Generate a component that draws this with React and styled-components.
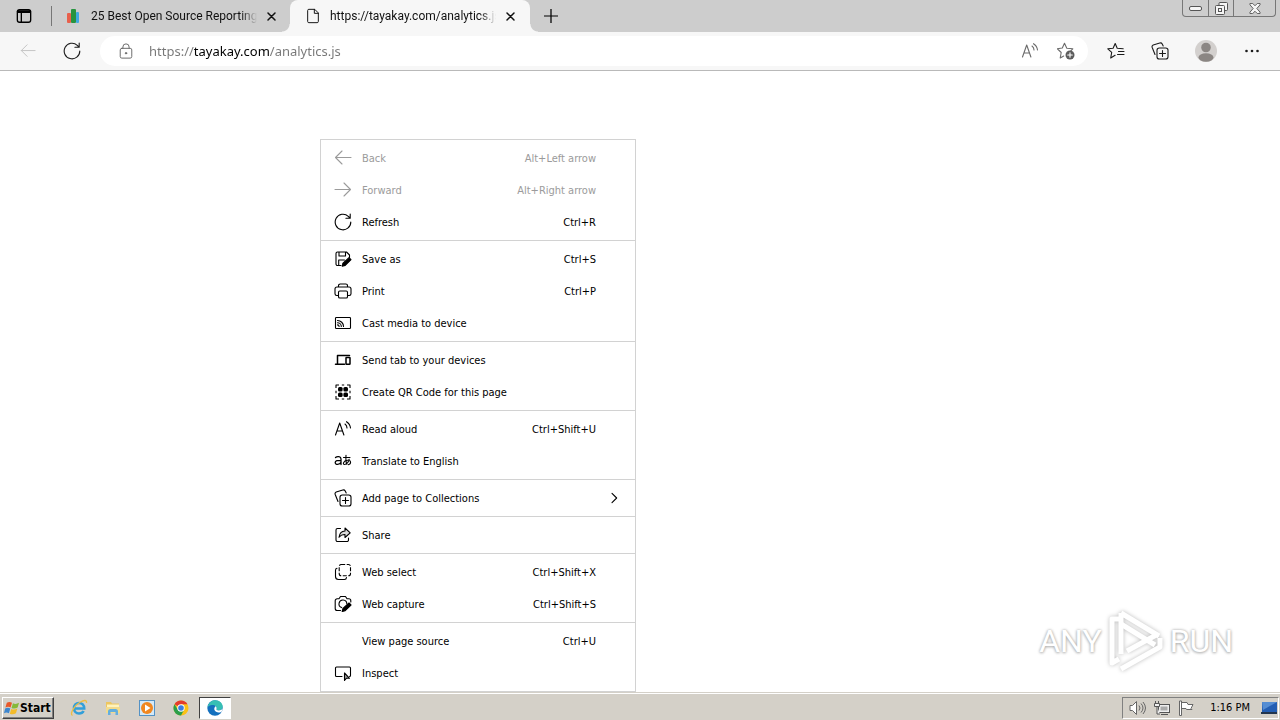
import React from "react";
import styled, { createGlobalStyle, css } from "styled-components";

const GlobalStyle = createGlobalStyle`
	* {
		box-sizing: border-box;
	}

	body {
		margin: 0;
		background: #fff;
		overflow: hidden;
		font-family: "Noto Sans", "Open Sans", sans-serif;
	}

	button,
	input {
		font: inherit;
		color: inherit;
		border: 0;
		padding: 0;
		margin: 0;
		background: none;
	}

	svg {
		display: block;
		flex: none;
	}
`;

const Browser = styled.div`
	display: flex;
	flex-direction: column;
	height: 100vh;
`;

/* tab strip */

const TabStrip = styled.header`
	display: flex;
	align-items: stretch;
	height: 32px;
	background: #cdcdcd;
`;

const TabActions = styled.button`
	display: flex;
	align-items: center;
	justify-content: center;
	width: 48px;
`;

const StripDivider = styled.div`
	width: 1px;
	height: 20px;
	margin: 6px 2px 0 3px;
	background: #767676;
`;

const Tab = styled.div`
	position: relative;
	display: flex;
	align-items: center;
	width: 236px;
	padding: 0 9px 0 12px;
	font-family: Roboto, sans-serif;
	font-size: 12px;
	color: #111;

	${({ $active }) =>
		$active &&
		css`
			width: 240px;
			padding: 0 10px 0 15px;
			background: #f7f7f7;
			border-radius: 8px 8px 0 0;

			&::before,
			&::after {
				content: "";
				position: absolute;
				bottom: 0;
				width: 8px;
				height: 8px;
			}

			&::before {
				right: 100%;
				background: radial-gradient(circle at 0 0, transparent 7px, #f7f7f7 8px);
			}

			&::after {
				left: 100%;
				background: radial-gradient(circle at 100% 0, transparent 7px, #f7f7f7 8px);
			}
		`}
`;

const TabTitle = styled.span`
	flex: 1;
	min-width: 0;
	margin: 0 4px 0 9px;
	line-height: 20px;
	white-space: nowrap;
	overflow: hidden;
	mask-image: linear-gradient(to left, transparent, #000 16px);
`;

const TabButton = styled.button`
	display: flex;
	align-items: center;
	justify-content: center;
	width: 20px;
	height: 20px;
`;

const NewTab = styled(TabButton)`
	width: 42px;
	height: 32px;
`;

const WindowControls = styled.div`
	display: flex;
	height: 17px;
	margin: 0 4px 0 auto;
	border: 1px solid #777;
	border-top: 0;
	border-radius: 0 0 4px 4px;
`;

const WindowButton = styled.button`
	display: flex;
	align-items: center;
	justify-content: center;
	width: ${({ $wide }) => ($wide ? 42 : 25)}px;
	border-left: ${({ $first }) => ($first ? "0" : "1px solid #777")};
`;

/* toolbar */

const Toolbar = styled.div`
	display: flex;
	align-items: center;
	height: 39px;
	padding: 0 6px;
	background: #f7f7f7;
	border-bottom: 1px solid #b9b9b9;
`;

const ToolButton = styled.button`
	display: flex;
	align-items: center;
	justify-content: center;
	width: 44px;
	height: 30px;
	color: ${({ $muted }) => ($muted ? "#c4c4c4" : "#1b1b1b")};
`;

const ProfileButton = styled(ToolButton)`
	width: 48px;
`;

const AddressBar = styled.form`
	display: flex;
	flex: 1;
	align-items: center;
	height: 30px;
	margin: 0 6px;
	padding-left: 18px;
	padding-right: 4px;
	border-radius: 15px;
	background: #fff;
	color: #6b6b6b;
`;

/* the host part of the address is darker than the rest */
const AddressInput = styled.input`
	flex: 1;
	min-width: 0;
	height: 20px;
	margin-left: 15px;
	font-size: 13px;
	outline: 0;
	color: transparent;
	background: linear-gradient(90deg, #767676 45px, #000 45px, #000 120px, #767676 120px);
	background-clip: text;
`;

const AddressButton = styled(ToolButton)`
	width: 36px;
	color: #6b6b6b;
`;

/* page and context menu */

const Page = styled.main`
	position: relative;
	flex: 1;
	background: #fff;
`;

const Menu = styled.div`
	position: absolute;
	top: 68px;
	left: 320px;
	width: 316px;
	border: 1px solid #d2d2d2;
	background: #fff;
	font-family: "DejaVu Sans Condensed", "DejaVu Sans", sans-serif;
	font-size: 11px;
`;

const MenuGroup = styled.div`
	padding: 2px 0;

	& + & {
		border-top: 1px solid #d2d2d2;
	}
`;

const MenuItem = styled.button`
	display: grid;
	grid-template-columns: 18px 1fr auto 24px;
	align-items: center;
	width: 100%;
	height: 32px;
	padding: 0 14px 0 13px;
	text-align: left;
	color: ${({ disabled }) => (disabled ? "#9b9b9b" : "#000")};
`;

const MenuLabel = styled.span`
	margin-left: 10px;
	white-space: nowrap;
`;

const Shortcut = styled.span`
	white-space: nowrap;
	margin-right: 1px;
`;

const SubmenuArrow = styled.span`
	display: flex;
	justify-content: flex-end;
	padding-right: 1px;
`;

const Watermark = styled.div`
	position: absolute;
	right: 47px;
	bottom: 18px;
	display: flex;
	align-items: center;
	gap: 6px;
	color: #fff;
	font-family: Roboto, "Liberation Sans", sans-serif;
	font-size: 32px;
	line-height: 66px;
	text-shadow: 0 0 3px #aaa, 0 1px 3px #bbb;

	svg {
		filter: drop-shadow(0 0 2px #bbb);
	}
`;

/* taskbar */

const Taskbar = styled.footer`
	display: flex;
	align-items: center;
	height: 28px;
	padding: 2px 1px 0 2px;
	border-top: 1px solid #d4d0c8;
	box-shadow: inset 0 1px #fff;
	background: #d4d0c8;
	font-family: "DejaVu Sans Condensed", "DejaVu Sans", sans-serif;
	font-size: 11px;
`;

const StartButton = styled.button`
	display: flex;
	align-items: center;
	width: 52px;
	height: 22px;
	padding-left: 1px;
	border: 1px solid;
	border-color: #fff #404040 #404040 #fff;
	box-shadow: inset -1px -1px #808080;
	font-size: 12px;
	font-weight: bold;
	color: #000;
`;

const QuickLaunch = styled.nav`
	display: flex;
	margin-left: 9px;
	gap: 2px;
`;

const TaskButton = styled.button`
	display: flex;
	align-items: center;
	justify-content: center;
	width: 32px;
	height: 22px;

	${({ $active }) =>
		$active &&
		css`
			background: #fff;
			border: 1px solid;
			border-color: #404040 #fff #fff #404040;
		`}
`;

const Tray = styled.div`
	display: flex;
	align-items: center;
	height: 22px;
	margin-left: auto;
	padding: 0 1px 0 6px;
	gap: 8px;
	border: 1px solid;
	border-color: #808080 #fff #fff #808080;
`;

const Clock = styled.time`
	margin: 0 3px 0 8px;
	white-space: nowrap;
	color: #000;
`;

const Icon = ({ size = 18, width = 1.1, children, ...rest }) => (
	<svg
		width={size}
		height={size}
		viewBox="0 0 18 18"
		fill="none"
		stroke="currentColor"
		strokeWidth={width}
		strokeLinecap="round"
		strokeLinejoin="round"
		aria-hidden="true"
		{...rest}
	>
		{children}
	</svg>
);

const icons = {
	back: <path d="M17 8.500H1.500M8 2 1.500 8.500 8 15" />,
	forward: <path d="M1 8.500h15.500M10 2 16.500 8.500 10 15" />,
	refresh: <path d="M16.800 9A7.800 7.800 0 1 1 14.300 3.300L16 5M16.200 1v4.300h-4.300" />,
	save: (
		<>
			<path d="M7 15.500H3.500A1.500 1.500 0 0 1 2 14V3.500A1.500 1.500 0 0 1 3.500 2h9L15.500 5v2.500M5 2v4h6.500V2M4.700 15.500V10h5.800" />
			<path d="m8.200 16.200.8-3 6-5.500 2 2-5.800 5.700z" fill="currentColor" />
		</>
	),
	print: (
		<>
			<path d="M4.500 13.500H2.700A1.700 1.700 0 0 1 1 11.800V7a2 2 0 0 1 2-2h12a2 2 0 0 1 2 2v4.800a1.700 1.700 0 0 1-1.700 1.700h-1.800M4.500 5V3.700A1.700 1.700 0 0 1 6.200 2h5.600a1.700 1.700 0 0 1 1.700 1.700V5" />
			<rect x="4.500" y="9" width="9" height="7" rx="1.300" />
		</>
	),
	cast: (
		<>
			<rect x="1.500" y="3.500" width="15" height="11" rx=".8" />
			<path d="M3.500 6.500a6 6 0 0 1 6 6M3.500 8.700a3.800 3.800 0 0 1 3.800 3.800M3.500 10.900a1.600 1.600 0 0 1 1.600 1.600" />
		</>
	),
	devices: (
		<>
			<path d="M3.500 12.500V4.500h12M1.500 13.200h9" strokeWidth="1.500" />
			<rect x="12" y="6.500" width="4" height="6.700" rx=".5" strokeWidth="1.500" />
		</>
	),
	qr: (
		<>
			<path d="M5 2H2v3M13 2h3v3M2 13v3h3M16 13v3h-3M2 7.800v2.400M16 7.800v2.400M7.800 2h2.400M7.800 16h2.400" strokeLinecap="butt" />
			<g fill="currentColor" stroke="none">
				<rect x="4" y="4" width="4.600" height="4.600" rx="1.500" />
				<rect x="9.400" y="4" width="4.600" height="4.600" rx="1.500" />
				<rect x="4" y="9.400" width="4.600" height="4.600" rx="1.500" />
				<rect x="9.400" y="9.400" width="4.600" height="4.600" rx="1.500" />
			</g>
		</>
	),
	read: <path d="m1.500 15 4.200-12 4.200 12M3 11h5.600M11 4a5 5 0 0 1 2 4M12.500 1.700A8.500 8.500 0 0 1 16.500 8" />,
	translate: (
		<>
			<path d="M1.500 5.500c1.800-1.600 5.500-1.200 5.500 1.400V12.500M7 8.300c-3.300 0-5.800.4-5.800 2.300 0 2.500 4.400 2.400 5.800-.3" strokeWidth="1.300" />
			<path d="M9.500 5.500h6.500M12 3.300c-.3 4-.2 6.700.8 8.900M15.200 7.200c-.8 3-3 5.300-4.700 5.300-2.200 0-1-4.200 3.200-4.200 3.800 0 3.700 3.700.5 4.400" />
		</>
	),
	collections: (
		<>
			<path d="M4 12.500 1.200 5.500A2 2 0 0 1 2.200 3l6.600-2a2 2 0 0 1 2.400 1l1 2" />
			<rect x="6" y="6" width="11" height="11" rx="2.300" />
			<path d="M11.500 8.500v6M8.500 11.500h6" />
		</>
	),
	share: (
		<>
			<path d="M6.500 2.500h-3A1.500 1.500 0 0 0 2 4v10a1.500 1.500 0 0 0 1.500 1.500h9.500a1.500 1.500 0 0 0 1.500-1.500v-2" />
			<path d="M11 2v3C7.500 5.200 5.500 7.500 5 11.200c1.600-2 3.500-2.700 6-2.700v3l5.200-4.700z" fill="#ddd" />
		</>
	),
	select: (
		<>
			<rect x="5.200" y="1.500" width="11.300" height="11.300" rx="2" strokeDasharray="4 1.500" strokeLinecap="butt" />
			<path d="M3 5.200C1.900 5.300 1.500 6 1.500 7.200V13.500a3 3 0 0 0 3 3h6c1.200 0 1.900-.7 2-2" />
		</>
	),
	capture: (
		<>
			<path d="M6.500 15.500H3.200A2 2 0 0 1 1.200 13.500V5.700a2 2 0 0 1 2-2H5l1.500-2.200h5L13 3.700h1.800a2 2 0 0 1 2 2V7" />
			<path d="M7.700 12.600A3.900 3.900 0 1 1 12.800 8.800" />
			<path d="m8.200 16.500.8-3 6-5.500 2 2-5.800 5.700z" fill="currentColor" />
		</>
	),
	inspect: (
		<>
			<path d="M8 12.500H2.500A1 1 0 0 1 1.500 11.500V4a1 1 0 0 1 1-1h13A1 1 0 0 1 16.500 4v7.500a1 1 0 0 1-1 1" />
			<path d="M10.500 9v7.500l1.800-2.200h3.200z" fill="#999" />
		</>
	),
	star: <path d="m8.200 1.500 2 4.700 6 .5M8.200 1.500 6.100 6.200l-5.300.6L4.700 10.400l-1 5.600 4.400-2.700" />,
};

const menuGroups = [
	[
		{ icon: "back", label: "Back", keys: "Alt+Left arrow", disabled: true },
		{ icon: "forward", label: "Forward", keys: "Alt+Right arrow", disabled: true },
		{ icon: "refresh", label: "Refresh", keys: "Ctrl+R" },
	],
	[
		{ icon: "save", label: "Save as", keys: "Ctrl+S" },
		{ icon: "print", label: "Print", keys: "Ctrl+P" },
		{ icon: "cast", label: "Cast media to device" },
	],
	[
		{ icon: "devices", label: "Send tab to your devices" },
		{ icon: "qr", label: "Create QR Code for this page" },
	],
	[
		{ icon: "read", label: "Read aloud", keys: "Ctrl+Shift+U" },
		{ icon: "translate", label: "Translate to English" },
	],
	[{ icon: "collections", label: "Add page to Collections", submenu: true }],
	[{ icon: "share", label: "Share" }],
	[
		{ icon: "select", label: "Web select", keys: "Ctrl+Shift+X" },
		{ icon: "capture", label: "Web capture", keys: "Ctrl+Shift+S" },
	],
	[
		{ label: "View page source", keys: "Ctrl+U" },
		{ icon: "inspect", label: "Inspect" },
	],
];

const CloseIcon = () => (
	<Icon size={9} width={3}>
		<path d="M2 2l14 14M16 2 2 16" />
	</Icon>
);

const ContextMenu = () => (
	<Menu role="menu">
		{menuGroups.map((group, index) => (
			<MenuGroup key={index} role="group">
				{group.map((item) => (
					<MenuItem key={item.label} role="menuitem" disabled={item.disabled}>
						<Icon>{icons[item.icon]}</Icon>
						<MenuLabel>{item.label}</MenuLabel>
						<Shortcut>{item.keys}</Shortcut>
						<SubmenuArrow>
							{item.submenu && (
								<Icon size={12} width={1.6}>
									<path d="m6 2 7 7-7 7" />
								</Icon>
							)}
						</SubmenuArrow>
					</MenuItem>
				))}
			</MenuGroup>
		))}
	</Menu>
);

const Tabs = () => (
	<TabStrip>
		<TabActions aria-label="Tab actions">
			<Icon size={16} width={1.5}>
				<rect x="1.500" y="2" width="15" height="14" rx="2.500" />
				<path d="M2.500 4h13" strokeWidth="3" />
				<path d="M6 5v10.500" />
			</Icon>
		</TabActions>
		<StripDivider />
		<Tab>
			<svg width="16" height="16" viewBox="0 0 16 16" aria-hidden="true">
				<rect x="1" y="5" width="4" height="10" rx="1" fill="#e8604c" />
				<rect x="10" y="4" width="3" height="11" rx="1" fill="#3fa9e0" />
				<rect x="5" y="1" width="5" height="14" rx="1" fill="#27943f" />
			</svg>
			<TabTitle>25 Best Open Source Reporting</TabTitle>
			<TabButton aria-label="Close tab">
				<CloseIcon />
			</TabButton>
		</Tab>
		<Tab $active>
			<Icon size={16}>
				<path d="M10.500 1.500H4.300A1.300 1.300 0 0 0 3 2.800v12.400a1.300 1.300 0 0 0 1.300 1.300h9.400a1.300 1.300 0 0 0 1.300-1.300V6zM10.500 1.500V6H15" />
			</Icon>
			<TabTitle>https://tayakay.com/analytics.js</TabTitle>
			<TabButton aria-label="Close tab">
				<CloseIcon />
			</TabButton>
		</Tab>
		<NewTab aria-label="New tab">
			<Icon size={14} width={1.6}>
				<path d="M9 0v18M0 9h18" />
			</Icon>
		</NewTab>
		<WindowControls>
			<WindowButton $first aria-label="Minimize">
				<svg width="13" height="6" viewBox="0 0 13 6">
					<rect x=".5" y="1.500" width="12" height="4" rx="1.500" fill="#f5f5f5" stroke="#555" />
				</svg>
			</WindowButton>
			<WindowButton aria-label="Restore">
				<svg width="13" height="13" viewBox="0 0 13 13" fill="#f5f5f5" stroke="#555">
					<rect x="4" y=".5" width="8.500" height="8" rx="1" />
					<rect x=".5" y="3.500" width="9" height="9" rx="1" />
					<rect x="3.500" y="6.500" width="3" height="3" />
				</svg>
			</WindowButton>
			<WindowButton $wide aria-label="Close">
				<svg width="12" height="11" viewBox="0 0 13 12" fill="#f5f5f5" stroke="#555">
					<path d="M1 .5h3L6.500 3 9 .5h3V2L8.500 6l3.500 4v1.500H9L6.500 9 4 11.500H1V10l3.500-4L1 2z" />
				</svg>
			</WindowButton>
		</WindowControls>
	</TabStrip>
);

const NavigationBar = () => (
	<Toolbar>
		<ToolButton $muted aria-label="Back">
			<Icon size={16}>{icons.back}</Icon>
		</ToolButton>
		<ToolButton aria-label="Refresh">
			<Icon>{icons.refresh}</Icon>
		</ToolButton>
		<AddressBar>
			<Icon size={16}>
				<rect x="2.500" y="6" width="13" height="11" rx="1.800" />
				<path d="M5.500 6V4.500a3.500 3.500 0 0 1 7 0V6" />
				<circle cx="9" cy="11.500" r=".8" fill="currentColor" />
			</Icon>
			<AddressInput
				type="text"
				aria-label="Address"
				defaultValue="https://tayakay.com/analytics.js"
			/>
			<AddressButton type="button" aria-label="Read aloud">
				<Icon>{icons.read}</Icon>
			</AddressButton>
			<AddressButton type="button" aria-label="Add to favorites">
				<Icon>
					<path d="m7.500 1.200 2.300 5 6 .6-2 2M7.500 1.200 5.300 6l-5 .7L4.200 10.500l-1 5.500 3.500-2" />
					<circle cx="13" cy="13" r="4.500" fill="#5c5c5c" stroke="none" />
					<path d="M13 10.700v4.600M10.700 13h4.600" stroke="#fff" />
				</Icon>
			</AddressButton>
		</AddressBar>
		<ToolButton aria-label="Favorites">
			<Icon>
				{icons.star}
				<path d="M11.500 9.500H17M10.500 12.500H17" />
			</Icon>
		</ToolButton>
		<ToolButton aria-label="Collections">
			<Icon>{icons.collections}</Icon>
		</ToolButton>
		<ProfileButton aria-label="Profile">
			<svg width="24" height="24" viewBox="0 0 24 24" aria-hidden="true">
				<circle cx="12" cy="12" r="11" fill="#d3d0ce" />
				<circle cx="12" cy="8.500" r="4.800" fill="#8b8683" />
				<ellipse cx="12" cy="18.500" rx="7.500" ry="4.200" fill="#8b8683" />
			</svg>
		</ProfileButton>
		<ToolButton aria-label="Settings and more">
			<Icon>
				<g fill="currentColor" stroke="none">
					<circle cx="3.500" cy="9" r="1.300" />
					<circle cx="9" cy="9" r="1.300" />
					<circle cx="14.500" cy="9" r="1.300" />
				</g>
			</Icon>
		</ToolButton>
	</Toolbar>
);

const PlayLogo = () => (
	<svg width="56" height="64" viewBox="0 0 56 64" fill="none" stroke="#fff" strokeWidth="5" strokeLinejoin="round">
		<path d="M11 10H4v44l7-4" />
		<path d="M13 4v41M13 4l38 23" />
		<path d="M13 15l34 21M19 42l31-17M13 60l39-22v-9" />
	</svg>
);

const WindowsTaskbar = () => (
	<Taskbar>
		<StartButton>
			<svg width="16" height="16" viewBox="0 0 17 16" aria-hidden="true">
				<path d="M3 2.500C5 1 7 1.500 8.500 2.500L7 7.500C5.300 6.500 3.500 6.500 1.500 7.500z" fill="#e8582a" />
				<path d="M9.500 3c2 1 4 1 6.500-.5L14.500 7.500c-2 1.300-4.500 1.500-6.500.5z" fill="#86b93a" />
				<path d="M1.200 8.500c2-1 3.800-1 5.500 0L5.200 13.500C3.500 12.500 1.700 12.500 0 13.500z" fill="#3c86cf" />
				<path d="M7.700 9c2 1 4 .8 6.500-.5L12.700 13.500c-2 1.300-4.500 1.500-6.500.5z" fill="#f3bb2a" />
			</svg>
			Start
		</StartButton>
		<QuickLaunch aria-label="Taskbar">
			<TaskButton aria-label="Internet Explorer">
				<svg width="18" height="18" viewBox="0 0 18 18" fill="none">
					<path d="M3.800 9.500h10.400C14.200 6 12 4 9 4S4 6.200 4 9.200 6 14.500 9 14.500c2.300 0 3.800-1 4.600-2.500" stroke="#329fd9" strokeWidth="2.600" />
					<path d="M2.500 16.500C-1 15 5 6 10 3.200c4-2.300 7-2.500 6.500.8" stroke="#edbd43" strokeWidth="1.300" />
				</svg>
			</TaskButton>
			<TaskButton aria-label="Windows Explorer">
				<svg width="16" height="16" viewBox="0 0 16 16">
					<path d="M1 2h5l1 1.500h7V13H1z" fill="#edc660" />
					<path d="M2 4.500h12V8H2z" fill="#fff3bd" />
					<path d="M1 7h14v6H1z" fill="#f3db8c" />
					<path d="M3 15V11.500Q3 9 5.500 9h5Q13 9 13 11.500V15h-2.500v-3h-5v3z" fill="#63aede" />
				</svg>
			</TaskButton>
			<TaskButton aria-label="Media Player">
				<svg width="16" height="16" viewBox="0 0 16 16">
					<rect x=".5" y=".5" width="15" height="15" fill="#d4e9f8" stroke="#5492c5" />
					<circle cx="8" cy="8" r="6" fill="#f18720" />
					<path d="M6 4.500 11.500 8 6 11.500z" fill="#fff" />
				</svg>
			</TaskButton>
			<TaskButton aria-label="Chrome">
				<svg width="16" height="16" viewBox="0 0 16 16">
					<circle cx="8" cy="8" r="7.500" fill="#fbc116" />
					<path d="M8 8 1.500 4.250A7.500 7.500 0 0 1 14.500 4.250H8z" fill="#e33b2e" />
					<path d="M1.500 4.250A7.500 7.500 0 0 0 8 15.500L11 10 5 10z" fill="#2a9e4b" />
					<circle cx="8" cy="8" r="3.700" fill="#fff" />
					<circle cx="8" cy="8" r="2.800" fill="#3c7de0" />
				</svg>
			</TaskButton>
			<TaskButton $active aria-label="Edge">
				<svg width="16" height="16" viewBox="0 0 16 16">
					<circle cx="8" cy="8" r="7.700" fill="#1470be" />
					<path d="M.5 7.500C1.300 3 4.500.3 8 .3c4.500 0 7.700 3 7.700 6.200 0 2.800-2 4-4.200 4-1.500 0-2.300-.5-2-1.200.8-3-2-4.700-4.500-4.300C3 5.300 1.300 6 .5 7.500z" fill="#37bfb4" />
					<path d="M9.500 9.300c-.3.700.5 1.200 2 1.200 2.200 0 3.500-.9 4.100-2.200l-.6 3c-1.800 2-6.500 1.700-7.600-1.500-.4-1.500.3-3 1.400-3.500.8.800 1 1.900.7 3z" fill="#fff" />
				</svg>
			</TaskButton>
		</QuickLaunch>
		<Tray>
			<svg width="17" height="16" viewBox="0 0 17 16" fill="none" stroke="#666">
				<path d="M1 5.500h2.500l4-4v13l-4-4H1z" fill="#fff" />
				<path d="M10 5.500q2 2.500 0 5M12 3.500q4 4.500 0 9M14 2q5 6 0 12" />
			</svg>
			<svg width="16" height="16" viewBox="0 0 16 16" fill="#eee" stroke="#555">
				<rect x="4.500" y="4.500" width="11" height="8" />
				<path d="M6.500 6.500h7v4h-7z" fill="#aaa" stroke="none" />
				<path d="M7 14.500h7M.5 3.500h5v3h-5zM1.500 1v2.500M4.500 1v2.500M3 6.500V14h3" />
			</svg>
			<svg width="16" height="16" viewBox="0 0 16 16" fill="#fff" stroke="#666">
				<path d="M1.500 1v14.500h2V1zM3.500 2.500H9L10 4.500h5l-2 4 1 1H8.500L8 8.500H3.500z" />
			</svg>
			<Clock>1:16 PM</Clock>
			<svg width="16" height="14" viewBox="0 0 16 14" aria-hidden="true">
				<rect x="1" y="1" width="15" height="10" fill="#245eb3" />
				<path d="M1 1h15L2 9z" fill="#558dd3" />
				<path d="M0 11h16v2H0z" fill="#24364e" />
			</svg>
		</Tray>
	</Taskbar>
);

const App = () => (
	<Browser>
		<GlobalStyle />
		<Tabs />
		<NavigationBar />
		<Page>
			<ContextMenu />
			<Watermark>
				<span>ANY</span>
				<PlayLogo />
				<span>RUN</span>
			</Watermark>
		</Page>
		<WindowsTaskbar />
	</Browser>
);

export default App;
